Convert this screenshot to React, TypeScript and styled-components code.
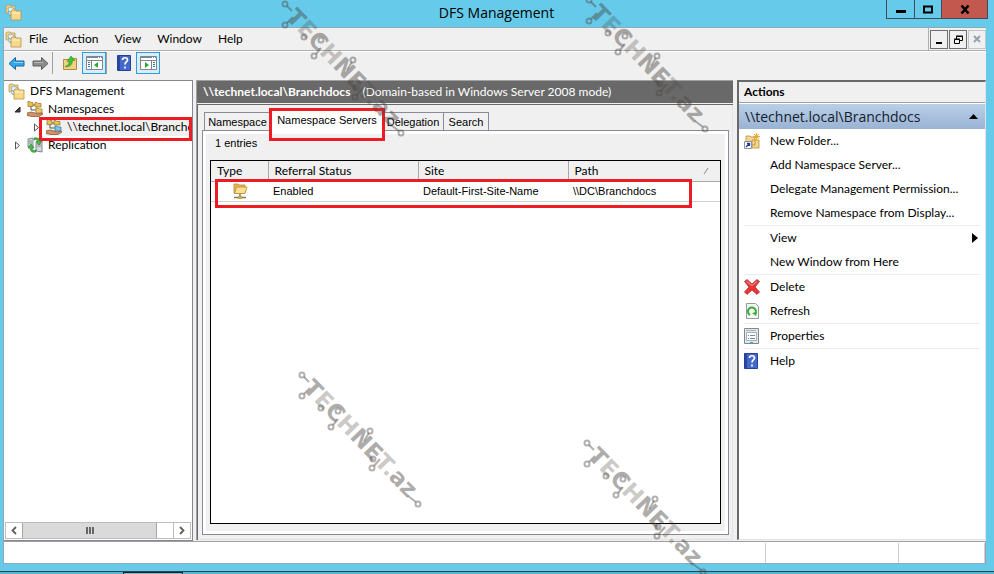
import React from "react";
import styled, { createGlobalStyle, css } from "styled-components";

const ui = `Lato, "Open Sans", sans-serif`;
const display = `"Open Sans", "Noto Sans", sans-serif`;
const classic = `"Liberation Sans", Arial, sans-serif`;

const GlobalStyle = createGlobalStyle`
  *, *::before, *::after { box-sizing: border-box; }
  body { margin: 0; background: #66cbea; color: #000; font: 12px/18px ${ui}; }
  button { margin: 0; padding: 0; border: 0; background: none; color: inherit; font: inherit; text-align: left; }
  ul { margin: 0; padding: 0; list-style: none; }
  svg { display: block; flex: none; }
`;

const Desktop = styled.div`
  position: relative;
  display: flex;
  flex-direction: column;
  min-height: 100vh;
  overflow: hidden;
`;
const TitleBar = styled.header`
  display: grid;
  grid-template-columns: 1fr auto 1fr;
  align-items: start;
  height: 27px;
  padding: 0 6px 0 5px;
`;
const TitleIcon = styled.div`
  padding-top: 4px;
`;
const Title = styled.h1`
  margin: 0;
  font: 400 14px/26px ${display};
`;
const Caption = styled.div`
  justify-self: end;
  display: flex;
  border: 1px solid #444b55;
  border-top: 0;
`;
const CaptionButton = styled.button<{ $close?: boolean }>`
  display: flex;
  justify-content: center;
  align-items: center;
  width: ${(p) => (p.$close ? 46 : 27)}px;
  height: 18px;
  background: ${(p) => (p.$close ? "#c2584e" : "transparent")};
  & + & { border-left: 1px solid #444b55; }
`;
const Frame = styled.div`
  flex: 1;
  display: flex;
  flex-direction: column;
  margin: 0 8px 0 3px;
  border: 1px solid #8fa9b5;
  border-width: 1px 0 1px 1px;
  background: #f0f0f0;
`;
const MenuBar = styled.nav`
  display: flex;
  align-items: center;
  height: 23px;
  padding-left: 1px;
  border-bottom: 1px solid #b0b0b0;
`;
const MenuButton = styled.button`
  font-size: 12px;
`;
const MenuItems = styled.div`
  flex: 1;
  display: flex;
  gap: 16px;
  padding-left: 7px;
`;
const ChildButtons = styled.div`
  display: flex;
  align-items: center;
  gap: 1px;
  height: 22px;
  padding-left: 1px;
  border-left: 1px solid #b0b0b0;
`;
const ChildButton = styled.button<{ $off?: boolean }>`
  display: flex;
  justify-content: center;
  align-items: center;
  width: 18px;
  height: 19px;
  border: 1px solid ${(p) => (p.$off ? "#c4c4c4" : "#6e6e6e")};
`;
const ToolBar = styled.div`
  display: flex;
  align-items: center;
  height: 29px;
  padding: 0 0 6px;
  border-top: 1px solid #fff;
`;
const Tool = styled.button<{ $on?: boolean }>`
  display: flex;
  justify-content: center;
  align-items: center;
  width: 24px;
  height: 22px;
  ${(p) => p.$on && css`
    border: 1px solid #2a9fdc;
    background: #dcebf8;
  `}
`;
const ToolRule = styled.span`
  width: 1px;
  height: 22px;
  background: #a0a0a0;
`;
const ToolSpace = styled.span`
  width: 5px;
`;
const Panes = styled.main`
  flex: 1;
  display: flex;
`;
const TreePane = styled.section`
  display: flex;
  flex-direction: column;
  justify-content: space-between;
  width: 189px;
  border: 1px solid #828790;
  border-left: 0;
  background: #fff;
`;
const Tree = styled.ul`
  padding-top: 1px;
`;
const TreeRow = styled.li<{ $depth: number }>`
  position: relative;
  display: flex;
  align-items: center;
  gap: 6px;
  height: 18px;
  padding-left: ${(p) => p.$depth}px;
`;
const TreeLabel = styled.button<{ $selected?: boolean }>`
  flex: 1;
  display: flex;
  align-items: center;
  gap: 5px;
  min-width: 0;
  height: 18px;
  overflow: hidden;
  white-space: nowrap;
  background: ${(p) => (p.$selected ? "#f0f0f0" : "none")};
`;
const Mark = styled.span<{ $inset: string }>`
  position: absolute;
  z-index: 2;
  inset: ${(p) => p.$inset};
  border: 3px solid #ed1c24;
  pointer-events: none;
`;
const ScrollBar = styled.div`
  display: flex;
  height: 17px;
  margin: 0 1px 1px;
  border: 1px solid #bdbdbd;
`;
const ScrollArrow = styled.button`
  display: flex;
  justify-content: center;
  align-items: center;
  width: 16px;
`;
const ScrollTrack = styled.div`
  flex: 1;
  display: flex;
  padding-right: 16px;
  border-right: 1px solid #bdbdbd;
`;
const ScrollThumb = styled.div`
  flex: 1;
  display: flex;
  justify-content: center;
  align-items: center;
  border: 1px solid #a6a6a6;
  border-width: 0 1px;
  background: #dadada;
`;
const Center = styled.section`
  flex: 1;
  display: flex;
  flex-direction: column;
  min-width: 0;
  margin: 0 4px 1px 3px;
  border: 1px solid #a0a0a0;
  border-width: 1px 0 0 1px;
`;
const PaneHeader = styled.div`
  display: flex;
  gap: 12px;
  height: 22px;
  padding-left: 6px;
  background: #696969;
  color: #fff;
  line-height: 22px;
  white-space: nowrap;
`;
const PaneBody = styled.div`
  flex: 1;
  display: flex;
  flex-direction: column;
  margin-top: 1px;
  padding: 6px 4px 5px;
  border: 1px solid #696969;
  border-width: 1px 0 0 1px;
  box-shadow: inset 0 -1px #e3e3e3, inset -1px 0 #e3e3e3;
  font: 11px/16px ${classic};
`;
const Tabs = styled.div`
  display: flex;
  align-items: flex-end;
  height: 19px;
  padding-left: 2px;
`;
const Tab = styled.button<{ $w: number; $active?: boolean }>`
  position: relative;
  width: ${(p) => p.$w}px;
  height: 18px;
  border: 1px solid #898c95;
  border-bottom: 0;
  text-align: center;
  white-space: nowrap;
  & + & { border-left: 0; }
  ${(p) => p.$active && css`
    z-index: 1;
    height: 21px;
    align-self: flex-start;
    padding-bottom: 4px;
    border: 0;
    background: #fff;
  `}
`;
const TabPanel = styled.div`
  flex: 1;
  display: flex;
  flex-direction: column;
  gap: 9px;
  padding: 4px 7px 10px;
  border: 1px solid #898c95;
  box-shadow: inset 0 0 0 3px #fff;
  background: #f0f0f0;
`;
const Count = styled.div`
  padding-left: 5px;
`;
const ListBox = styled.div`
  position: relative;
  flex: 1;
  border: 1px solid #000;
  background: #fff;
`;
const List = styled.table`
  width: 100%;
  table-layout: fixed;
  border-collapse: collapse;
  th {
    height: 20px;
    padding: 0 6px;
    border-bottom: 1px solid #a8a8a8;
    background: #f0f0f0;
    font: 12px/18px ${ui};
    text-align: left;
  }
  th + th { border-left: 1px solid #a8a8a8; }
  td {
    height: 20px;
    padding: 0 5px;
    border-bottom: 1px solid #d0d0d0;
    white-space: nowrap;
  }
  td svg { margin: 0 auto; }
`;
const SortHead = styled.span`
  display: flex;
  justify-content: space-between;
  align-items: center;
`;
const Actions = styled.aside`
  width: 249px;
  margin-bottom: 1px;
  border: 1px solid #696969;
  border-width: 2px 1px 1px 2px;
  border-right-color: #e3e3e3;
  border-bottom-color: #e3e3e3;
  background: #fff;
`;
const ActionsTitle = styled.h2`
  margin: 0 0 1px;
  height: 21px;
  padding-left: 5px;
  border-bottom: 1px solid #a0a0a0;
  background: #f0f0f0;
  font-size: 12px;
  line-height: 20px;
`;
const ActionsGroup = styled.button`
  display: flex;
  justify-content: space-between;
  align-items: center;
  width: 100%;
  height: 25px;
  padding: 0 7px 0 6px;
  background: linear-gradient(#b8cfe8, #9ab3d3);
  font: 14px/24px ${display};
  color: #16202c;
`;
const ActionList = styled.ul`
  padding: 0 5px;
`;
const ActionSet = styled.li`
  & + & { border-top: 1px solid #ececec; }
`;
const Action = styled.button`
  display: grid;
  grid-template-columns: 26px 1fr auto;
  align-items: center;
  width: 100%;
  height: 24px;
  padding-right: 2px;
  white-space: nowrap;
`;
const StatusBar = styled.footer`
  display: flex;
  height: 22px;
  border-top: 1px solid #a0a0a0;
  border-right: 1px solid #a0a0a0;
  background: #fff;
`;
const StatusCell = styled.div<{ $w?: number }>`
  flex: ${(p) => (p.$w ? `0 0 ${p.$w}px` : "1")};
  margin-top: 1px;
  border-right: 1px solid #d0d0d0;
`;
const TaskEdge = styled.div`
  height: 3px;
  margin-top: 7px;
  padding-left: 123px;
  border-top: 1px solid #2b4550;
  background: #5bb3cf;
`;
const TaskItem = styled.div`
  width: 60px;
  height: 2px;
  background: #86b8c9;
  border: 1px solid #17252b;
  border-bottom: 0;
`;
const Stamp = styled.svg<{ $x: number; $y: number }>`
  position: absolute;
  z-index: 3;
  left: ${(p) => p.$x}px;
  top: ${(p) => p.$y}px;
  pointer-events: none;
  overflow: visible;
  fill: #4a4541;
  stroke: #4a4541;
  font: 700 23px "DejaVu Sans", sans-serif;
  text { stroke: none; fill-opacity: 0.46; }
  .pale { fill-opacity: 0.28; }
  .pins { fill: none; stroke-width: 2; stroke-opacity: 0.42; }
`;

const Watermark = ({ x, y }: { x: number; y: number }) => (
  <Stamp $x={x} $y={y} width="130" height="140" viewBox="0 0 130 140" aria-hidden>
    <g transform="translate(4 18) rotate(46)">
      <text x="0" y="0">
        T<tspan className="pale">E</tspan>C<tspan className="pale">H</tspan>NE
        <tspan className="pale">T.</tspan>az
      </text>
    </g>
    <g className="pins">
      <circle cx="4" cy="4" r="2.5" />
      <circle cx="4" cy="25" r="2.5" />
      <circle cx="23" cy="37" r="2.5" />
      <circle cx="40" cy="40" r="2.5" />
      <circle cx="33" cy="56" r="2.5" />
      <circle cx="72" cy="60" r="2.5" />
      <circle cx="75" cy="88" r="2.5" />
      <circle cx="74" cy="97" r="2.5" />
      <circle cx="120" cy="133" r="2.5" />
      <path d="M6 6l5 5M6 23l6-6M35 54l5-6M71 62l-5 8M76 95l6-7M118 131l-8-6" />
    </g>
  </Stamp>
);

const Folders = () => (
  <svg width="17" height="17" viewBox="0 0 17 17">
    <path d="M1 2l1-1h3l1 1h4v7H1z" fill="#f3d488" stroke="#b98d3e" strokeWidth=".7" />
    <path d="M3 4l3-1 5 3-1 6-6-1z" fill="#e4f1f7" stroke="#6c9db5" strokeWidth=".7" />
    <path d="M5 12l5-6M4 7l6 5" stroke="#4c9cb9" strokeWidth=".8" />
    <path d="M6 8V7l1-1h3l1 1h5v9H6z" fill="#f7d98b" stroke="#bb9144" strokeWidth=".8" />
    <path d="M7 9h8" stroke="#fff2c6" />
  </svg>
);
const Namespace = ({ blue }: { blue?: boolean }) => (
  <svg width="16" height="16" viewBox="0 0 16 16">
    <path d="M4 4v5h6M4 4h5" fill="none" stroke="#555" />
    <path d="M1 .5h2l1 1h2v4H1zM8 1.500h2l1 1h3v3.500H8z" fill="#e9c14f" stroke="#907033" strokeWidth=".7" />
    <path d="M9 7h2l1 1h3v4H9z" fill={blue ? "#79c3e4" : "#f0ca60"} stroke={blue ? "#377995" : "#907033"} strokeWidth=".7" />
    <path d="M0 12l4-1 4 1 3 1 4-1 1 1-4 2.500H5l-5-1z" fill="#cf9568" stroke="#7c4d2e" strokeWidth=".7" />
  </svg>
);
const Replication = () => (
  <svg width="16" height="16" viewBox="0 0 16 16">
    <path d="M1 2l5-1v10l-5-1zM9 5l6-1v11l-6-1z" fill="#d4d9dc" stroke="#66737a" strokeWidth=".8" />
    <path d="M2 4h3M2 6h3M10 7h4M10 9h4" stroke="#66737a" strokeWidth=".7" />
    <path d="M7 1c4-1 6 1 6 3h2l-3 4-3-4h2c0-1-2-2-4-1zM9 15c-4 1-6-1-6-4H1l3-4 3 4H5c0 2 2 3 4 2z" fill="#49ba43" stroke="#197d25" strokeWidth=".6" />
  </svg>
);
const Twisty = ({ open }: { open?: boolean }) => (
  <svg width="7" height="9" viewBox="0 0 7 9">
    {open ? <path d="M6 2v5H1z" fill="#404040" stroke="#222" /> : <path d="M1.500 1v7l4-3.500z" fill="#fff" stroke="#555" />}
  </svg>
);
const Arrow = ({ forward }: { forward?: boolean }) => (
  <svg width="17" height="15" viewBox="0 0 17 15">
    <path
      d={forward ? "M16 7.500L9.500 1.500V5H1v5h8.500v3.500z" : "M1 7.500L7.500 1.500V5H16v5H7.500v3.500z"}
      fill={forward ? "#8c8c8c" : "#35a6e8"}
      stroke={forward ? "#5c5c5c" : "#1867a5"}
    />
    <path d={forward ? "M2 6.500h9" : "M6 6.500h9"} stroke={forward ? "#b9b9b9" : "#8cd6fb"} />
  </svg>
);
const UpFolder = () => (
  <svg width="16" height="16" viewBox="0 0 16 16">
    <path d="M1.500 4.500h8l1-1h4v11h-13z" fill="#f2d27f" stroke="#b18b43" />
    <path d="M3 11.500c3-1 4-2 4-5H5L9 1l4 4.500h-2.500c0 4-3 7-7.500 6z" fill="#44be35" stroke="#268b22" strokeWidth=".5" />
  </svg>
);
const Layout = ({ right }: { right?: boolean }) => (
  <svg width="17" height="14" viewBox="0 0 17 14">
    <path d="M.5.500h16v13H.5z" fill="#fff" stroke="#7d8790" />
    <path d="M1 1.500h15M1 4.500h15" stroke="#7d8790" />
    <path d="M12 1.500h1M14 1.500h1" stroke="#fff" />
    <path d={right ? "M11.500 5v8" : "M5.500 5v8"} stroke="#7d8790" />
    <path d={right ? "M13 6.500h2M13 8.500h2M13 10.500h2" : "M2 6.500h2M2 8.500h2M2 10.500h2"} stroke="#2c78c0" />
    <path d={right ? "M5 6v6l4-3z" : "M12 6v6L8 9z"} fill="#2eaa2a" />
  </svg>
);
const HelpIcon = () => (
  <svg width="14" height="16" viewBox="0 0 14 16">
    <path d="M.5.500h13v15H.5z" fill="#4568cb" stroke="#263f99" />
    <path d="M1 1h2v14H1z" fill="#2b469e" />
    <path d="M5.500 5c0-3 5-3 5 0 0 2-2.500 2-2.500 4.500M8 11.500v2" fill="none" stroke="#fff" strokeWidth="1.700" />
  </svg>
);
const ServerFolder = () => (
  <svg width="16" height="17" viewBox="0 0 16 17">
    <path d="M2 3V1h4l1 1h6v8H2z" fill="#e9bb54" stroke="#b58835" strokeWidth=".8" />
    <path d="M4.500 4H15l-2 6.500H2.500z" fill="#ffe092" stroke="#b58835" strokeWidth=".8" />
    <path d="M8 11v3M2 14.500h12" stroke="#777" strokeWidth="1.600" />
    <path d="M6 13h4v3H6z" fill="#d5a634" />
  </svg>
);
const NewFolder = () => (
  <svg width="17" height="17" viewBox="0 0 17 17">
    <path d="M2 3h4l1 1h4v8H2zM8 7h7v8H8z" fill="#f5d684" stroke="#b48e44" strokeWidth=".8" />
    <path d="M12.500 0v7M9 3.500h7M10 1l5 5M15 1l-5 5" stroke="#f0a428" />
    <path d="M.5 8.500h7v7h-7z" fill="#fff" stroke="#8993a0" />
    <path d="M2 14l3-3M3 10.500h2.500V13" fill="none" stroke="#20339c" strokeWidth="1.300" />
  </svg>
);
const DeleteIcon = () => (
  <svg width="16" height="16" viewBox="0 0 16 16">
    <path d="M.5 2.500l2.500-2 5 4.500 5-4.500 2.500 2L11 8l4.500 5-2.500 2.500L8 11l-5 4.500L.5 13 5 8z" fill="#ea3634" stroke="#b12b2b" strokeWidth=".8" />
    <path d="M2.500 2.500l5.500 4 5-4" fill="none" stroke="#f99b93" />
  </svg>
);
const RefreshIcon = () => (
  <svg width="16" height="16" viewBox="0 0 16 16">
    <path d="M2.500.500h9l3 3v12h-12z" fill="#f4f5f5" stroke="#939b9f" />
    <path d="M6 12a4 4 0 1 1 5-1" fill="none" stroke="#38ae36" strokeWidth="2" />
    <path d="M8 10l5-1-1 4z" fill="#38ae36" />
  </svg>
);
const PropertiesIcon = () => (
  <svg width="16" height="16" viewBox="0 0 16 16">
    <path d="M.5.500h14v15H.5z" fill="#e4e8eb" stroke="#80898f" />
    <path d="M2.500 4.500h10v8h-10z" fill="#fff" stroke="#a6b0b7" />
    <path d="M2 2.500h10" stroke="#a6b0b7" />
    <path d="M4 7.500h1M4 10.500h1M6 14.500h3" stroke="#27aee0" />
    <path d="M6 7.500h5M6 10.500h5" stroke="#7a8790" />
  </svg>
);
const Chevron = ({ right }: { right?: boolean }) => (
  <svg width="6" height="9" viewBox="0 0 6 9">
    <path d={right ? "M1 1l3.500 3.500L1 8" : "M5 1L1.500 4.500 5 8"} fill="none" stroke="#606060" strokeWidth="1.800" />
  </svg>
);

type Item = { label: string; icon?: React.ReactNode; more?: boolean };
const actionSets: Item[][] = [
  [
    { label: "New Folder...", icon: <NewFolder /> },
    { label: "Add Namespace Server..." },
    { label: "Delegate Management Permission..." },
    { label: "Remove Namespace from Display..." },
  ],
  [{ label: "View", more: true }, { label: "New Window from Here" }],
  [
    { label: "Delete", icon: <DeleteIcon /> },
    { label: "Refresh", icon: <RefreshIcon /> },
  ],
  [{ label: "Properties", icon: <PropertiesIcon /> }],
  [{ label: "Help", icon: <HelpIcon /> }],
];

export default function App() {
  return (
    <Desktop>
      <GlobalStyle />
      <TitleBar>
        <TitleIcon><Folders /></TitleIcon>
        <Title>DFS Management</Title>
        <Caption>
          <CaptionButton aria-label="Minimize">
            <svg width="10" height="10"><path d="M0 6h10v3H0z" /></svg>
          </CaptionButton>
          <CaptionButton aria-label="Maximize">
            <svg width="10" height="9"><path d="M1 1.500h8v6H1z" fill="none" stroke="#000" strokeWidth="2" /></svg>
          </CaptionButton>
          <CaptionButton $close aria-label="Close">
            <svg width="10" height="9"><path d="M1.500.500l7 8M8.500.500l-7 8" stroke="#000" strokeWidth="2.500" /></svg>
          </CaptionButton>
        </Caption>
      </TitleBar>
      <Frame>
        <MenuBar>
          <Folders />
          <MenuItems>
            {["File", "Action", "View", "Window", "Help"].map((m) => (
              <MenuButton key={m}>{m}</MenuButton>
            ))}
          </MenuItems>
          <ChildButtons>
            <ChildButton aria-label="Minimize child window">
              <svg width="8" height="9"><path d="M1 7h6v2H1z" /></svg>
            </ChildButton>
            <ChildButton aria-label="Restore child window">
              <svg width="9" height="9" fill="none" stroke="#000">
                <path d="M2.500 4V1.500h6v4H6M2 1h7M.5 4.500h5v4h-5zM0 4h6" />
              </svg>
            </ChildButton>
            <ChildButton $off aria-label="Close child window">
              <svg width="8" height="8"><path d="M1 1l6 6M7 1L1 7" stroke="#94a2b0" strokeWidth="2" /></svg>
            </ChildButton>
          </ChildButtons>
        </MenuBar>
        <ToolBar>
          <Tool aria-label="Back"><Arrow /></Tool>
          <Tool aria-label="Forward"><Arrow forward /></Tool>
          <ToolRule />
          <ToolSpace />
          <Tool aria-label="Up one level"><UpFolder /></Tool>
          <Tool $on aria-label="Show or hide console tree"><Layout /></Tool>
          <ToolRule />
          <ToolSpace />
          <Tool aria-label="Help"><HelpIcon /></Tool>
          <Tool $on aria-label="Show or hide action pane"><Layout right /></Tool>
        </ToolBar>
        <Panes>
          <TreePane>
            <Tree>
              <TreeRow $depth={4}>
                <TreeLabel><Folders />DFS Management</TreeLabel>
              </TreeRow>
              <TreeRow $depth={10}>
                <Twisty open />
                <TreeLabel><Namespace />Namespaces</TreeLabel>
              </TreeRow>
              <TreeRow $depth={29}>
                <Twisty />
                <TreeLabel $selected><Namespace blue />\\technet.local\Branchdocs</TreeLabel>
                <Mark $inset="-1px 0 -5px 35px" />
              </TreeRow>
              <TreeRow $depth={10}>
                <Twisty />
                <TreeLabel><Replication />Replication</TreeLabel>
              </TreeRow>
            </Tree>
            <ScrollBar>
              <ScrollArrow aria-label="Scroll left"><Chevron /></ScrollArrow>
              <ScrollTrack>
                <ScrollThumb>
                  <svg width="8" height="7"><path d="M0 0h2v7H0zM3 0h2v7H3zM6 0h2v7H6z" fill="#666" /></svg>
                </ScrollThumb>
              </ScrollTrack>
              <ScrollArrow aria-label="Scroll right"><Chevron right /></ScrollArrow>
            </ScrollBar>
          </TreePane>
          <Center>
            <PaneHeader>
              <strong>\\technet.local\Branchdocs</strong>
              <span>(Domain-based in Windows Server 2008 mode)</span>
            </PaneHeader>
            <PaneBody>
              <Tabs role="tablist">
                <Tab role="tab" $w={67}>Namespace</Tab>
                <Tab role="tab" $w={112} $active aria-selected>
                  Namespace Servers
                  <Mark $inset="-3px -2px -9px -2px" />
                </Tab>
                <Tab role="tab" $w={61}>Delegation</Tab>
                <Tab role="tab" $w={45}>Search</Tab>
              </Tabs>
              <TabPanel role="tabpanel">
                <Count>1 entries</Count>
                <ListBox>
                  <List>
                    <colgroup>
                      <col width="57" /><col width="150" /><col width="150" /><col />
                    </colgroup>
                    <thead>
                      <tr>
                        <th>Type</th>
                        <th>Referral Status</th>
                        <th>Site</th>
                        <th>
                          <SortHead>
                            Path
                            <svg width="12" height="8"><path d="M2 7l4-6" stroke="#888" /></svg>
                          </SortHead>
                        </th>
                      </tr>
                    </thead>
                    <tbody>
                      <tr>
                        <td><ServerFolder /></td>
                        <td>Enabled</td>
                        <td>Default-First-Site-Name</td>
                        <td>\\DC\Branchdocs</td>
                      </tr>
                    </tbody>
                  </List>
                  <Mark $inset="18px 28px auto 4px"><svg width="1" height="23" /></Mark>
                </ListBox>
              </TabPanel>
            </PaneBody>
          </Center>
          <Actions>
            <ActionsTitle>Actions</ActionsTitle>
            <ActionsGroup>
              \\technet.local\Branchdocs
              <svg width="9" height="5"><path d="M4.500 0L9 5H0z" /></svg>
            </ActionsGroup>
            <ActionList>
              {actionSets.map((set, i) => (
                <ActionSet key={i}>
                  {set.map((a) => (
                    <Action key={a.label}>
                      <span>{a.icon}</span>
                      <span>{a.label}</span>
                      {a.more && <svg width="6" height="10"><path d="M0 0l6 5-6 5z" /></svg>}
                    </Action>
                  ))}
                </ActionSet>
              ))}
            </ActionList>
          </Actions>
        </Panes>
        <StatusBar>
          <StatusCell />
          <StatusCell $w={133} />
          <StatusCell $w={86} />
        </StatusBar>
      </Frame>
      <TaskEdge><TaskItem /></TaskEdge>
      <Watermark x={281} y={0} />
      <Watermark x={585} y={-4} />
      <Watermark x={298} y={371} />
      <Watermark x={583} y={439} />
    </Desktop>
  );
}
